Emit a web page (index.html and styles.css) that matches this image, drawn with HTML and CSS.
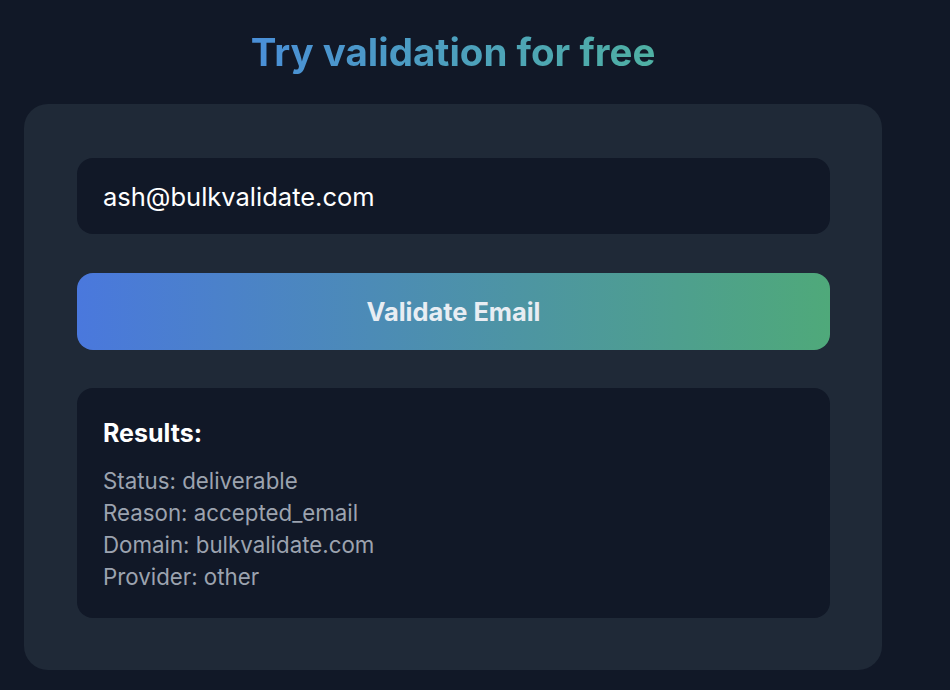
FILE: index.html
```html
<!DOCTYPE html>
<html>
<head>
<meta charset="utf-8">
<link rel="stylesheet" href="styles.css">
</head>
<body>
<main class="page">
  <h1 class="title">Try validation for free</h1>
  <section class="card">
    <div class="input">ash@bulkvalidate.com</div>
    <button class="btn">Validate Email</button>
    <div class="results">
      <h2 class="results-title">Results:</h2>
      <div class="row">Status: deliverable</div>
      <div class="row">Reason: accepted_email</div>
      <div class="row">Domain: bulkvalidate.com</div>
      <div class="row">Provider: other</div>
    </div>
  </section>
</main>
</body>
</html>
```
FILE: styles.css
```css
html, body {
  margin: 0;
  padding: 0;
  background: #111827;
  font-family: Inter, "Noto Sans", sans-serif;
}
.page {
  width: 858px;
  margin-left: 24px;
  display: flex;
  flex-direction: column;
  align-items: stretch;
}
.title {
  margin: 28px 0 0;
  height: 48px;
  line-height: 48px;
  font-size: 38.5px;
  font-weight: 700;
  text-align: center;
  align-self: center;
  background: linear-gradient(90deg, #4a8fd8, #4fb0a3);
  -webkit-background-clip: text;
  background-clip: text;
  color: transparent;
}
.card {
  margin-top: 28px;
  background: #1f2937;
  border-radius: 24px;
  padding: 54px 52px 52px 53px;
  display: flex;
  flex-direction: column;
  gap: 39px;
}
.input {
  height: 76px;
  box-sizing: border-box;
  background: #111827;
  border-radius: 16px;
  padding: 0 26px;
  display: flex;
  align-items: center;
  color: #ffffff;
  font-size: 25.5px;
}
.btn {
  height: 77px;
  margin-top: 0;
  border: none;
  border-radius: 16px;
  background: linear-gradient(90deg, #4a78dd, #4fa97a);
  color: #e8edf3;
  font-family: inherit;
  font-size: 25.4px;
  font-weight: 700;
}
.results {
  margin-top: -1px;
  background: #111827;
  border-radius: 16px;
  padding: 29px 26px 24px;
  height: 230px;
  box-sizing: border-box;
}
.results-title {
  margin: 0 0 16px;
  color: #ffffff;
  font-size: 25px;
  font-weight: 700;
  line-height: 32px;
}
.row {
  color: #9ca3af;
  font-size: 22.3px;
  line-height: 32px;
}
```
